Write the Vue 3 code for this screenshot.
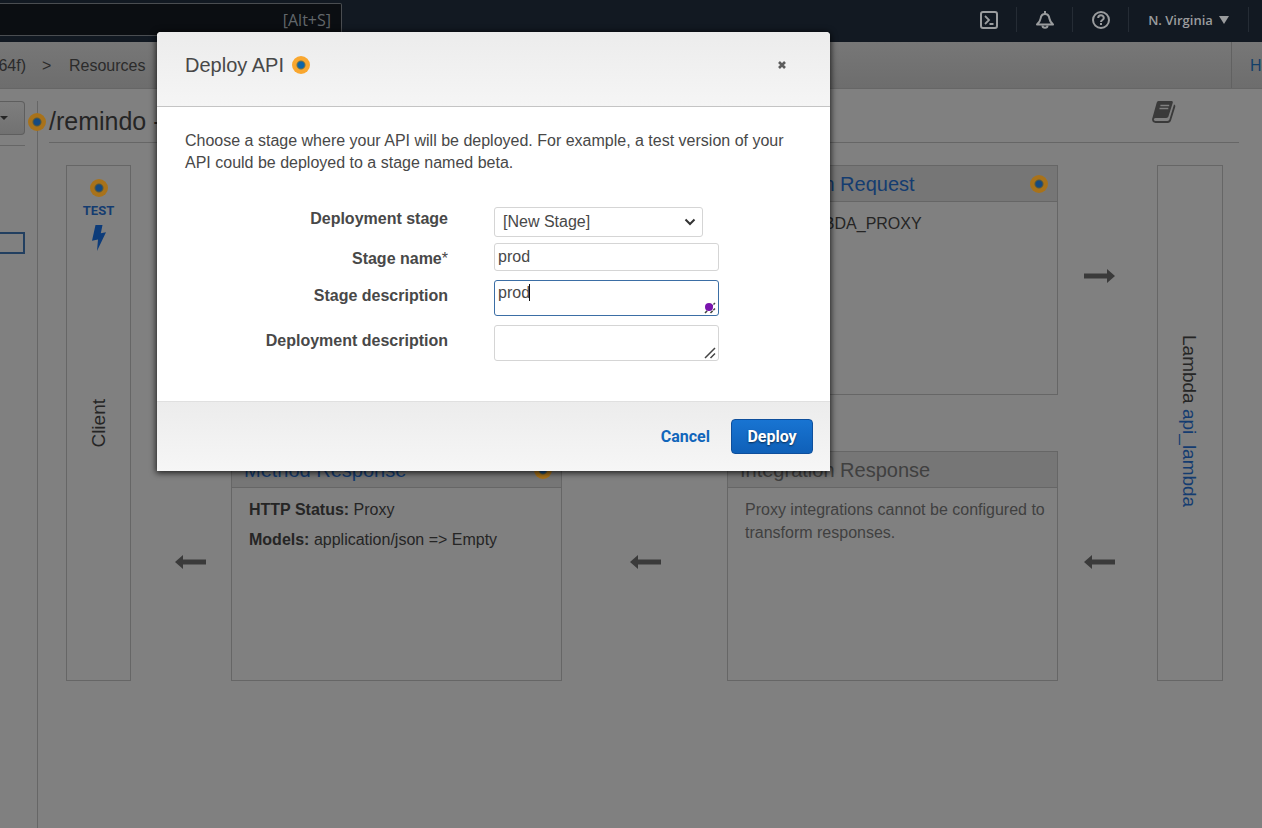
<script setup>
import { ref } from 'vue'

const stage = ref('new')
const stageName = ref('prod')
const stageDescription = ref('prod')
const deploymentDescription = ref('')
const flows = ['a-top', 'a-left', 'a-mid', 'a-right']
</script>

<template>
  <div class="page">
    <header class="nav">
      <input class="search" type="text" placeholder="[Alt+S]" aria-label="Search services" />
      <div class="nav-tools">
        <button class="tool" aria-label="CloudShell">
          <svg width="20" height="20" viewBox="0 0 20 20" fill="none" stroke="currentColor" stroke-width="2">
            <rect x="2" y="2" width="16" height="16" rx="2" />
            <path d="M6 6l4 4-4 4M10.500 14h4" stroke-width="1.800" />
          </svg>
        </button>
        <button class="tool" aria-label="Notifications">
          <svg width="20" height="20" viewBox="0 0 20 20" fill="none" stroke="currentColor" stroke-width="2" stroke-linejoin="round">
            <path d="M10 1v3M2 14.500C4.500 12 5.300 11 5.600 8.500 6 5.500 7.500 4 10 4s4 1.500 4.400 4.500c.3 2.500 1.100 3.500 3.600 6z" />
            <path d="M7.500 15.500c0 3 5 3 5 0" />
          </svg>
        </button>
        <button class="tool" aria-label="Support">
          <svg width="20" height="20" viewBox="0 0 20 20" fill="none" stroke="currentColor" stroke-width="2">
            <circle cx="10" cy="10" r="8" />
            <path d="M7.200 8c0-3.700 5.600-3.700 5.600 0 0 2-2.800 2-2.800 4M10 13v2" />
          </svg>
        </button>
        <button class="region">
          N. Virginia
          <svg width="10" height="8" viewBox="0 0 10 8"><path d="M0 0h10L5 8z" fill="currentColor" /></svg>
        </button>
      </div>
    </header>

    <nav class="crumbs" aria-label="Breadcrumb">
      <div class="trail"><span class="cut">64f)</span><span class="sep">&gt;</span><span>Resources</span></div>
      <a class="help" href="#">Help</a>
    </nav>

    <div class="columns">
      <aside class="side">
        <button class="actions" aria-label="Actions">
          <svg width="8" height="4" viewBox="0 0 8 4"><path d="M0 0h8L4 4z" fill="currentColor" /></svg>
        </button>
        <div class="rule"></div>
        <div class="selected"></div>
      </aside>

      <main class="main">
        <div class="title-row">
          <h1><span class="dot title-dot"></span>/remindo - GET</h1>
          <svg class="book" width="24" height="22" viewBox="0 0 24 22">
            <path d="M6.500 0h12.700c1.300 0 1.900.8 1.500 2l-4.200 13.300c-.4 1.200-1 1.700-2.300 1.700H3.500c-2.200 0-2.200 3 0 3h12c1 0 1.600-.5 1.900-1.400L22 3.500c1.100.4 1.600 1.200 1.200 2.400L19 19.500c-.5 1.600-1.600 2.500-3.200 2.500H3.500C.8 22-.6 19.500.4 17L4.600 2C5 .8 5.500 0 6.500 0z" fill="#3a3a3a" />
            <path d="M8.400 4.500h8.800M7.500 7.500h8.800" stroke="#808080" stroke-width="1.300" />
          </svg>
        </div>

        <div class="flow">
          <section class="end client">
            <a class="test" href="#">
              <span class="dot"></span>
              TEST
              <svg width="14" height="26" viewBox="0 0 14 26"><path d="M3.500 0h7L8.800 8.200l5.200-1L5 26l1-11.500-6 1.200z" fill="#0d3c7a" /></svg>
            </a>
            <span class="vertical up">Client</span>
          </section>

          <div v-for="f in flows" :key="f" class="arrow" :class="f">
            <svg width="32" height="14" viewBox="0 0 32 14"><path d="M0 7l8-7v4.500h23v5H8V14z" fill="currentColor" /></svg>
          </div>

          <section class="card request">
            <h2><a href="#">Integration Request</a><span class="dot"></span></h2>
            <p><b>Type:</b> LAMBDA_PROXY</p>
          </section>
          <section class="card method">
            <h2><a href="#">Method Response</a><span class="dot"></span></h2>
            <p><b>HTTP Status:</b> Proxy</p>
            <p><b>Models:</b> application/json =&gt; Empty</p>
          </section>
          <section class="card response">
            <h2>Integration Response</h2>
            <p>Proxy integrations cannot be configured to transform responses.</p>
          </section>

          <section class="end lambda">
            <span class="vertical">Lambda <a href="#">api_lambda</a></span>
          </section>
        </div>
      </main>
    </div>

    <form class="modal" role="dialog" aria-labelledby="dialog-title" @submit.prevent>
      <header class="modal-head">
        <h2 id="dialog-title">Deploy API</h2>
        <span class="dot bright"></span>
        <button type="button" class="close" aria-label="Close">
          <svg width="8" height="8" viewBox="0 0 8 8"><path d="M1 1l6 6M7 1L1 7" stroke="#5c5c5c" stroke-width="2.600" /></svg>
        </button>
      </header>
      <div class="modal-body">
        <p>Choose a stage where your API will be deployed. For example, a test version of your API could be deployed to a stage named beta.</p>
        <div class="fields">
          <label for="stage">Deployment stage</label>
          <div class="control pick">
            <select id="stage" v-model="stage"><option value="new">[New Stage]</option></select>
            <svg class="chevron" width="12" height="8" viewBox="0 0 12 8" fill="none"><path d="M1.500 1.500L6 6l4.500-4.500" stroke="#333" stroke-width="2" /></svg>
          </div>
          <label for="name">Stage name<span class="star">*</span></label>
          <div class="control"><input id="name" v-model="stageName" type="text" /></div>
          <label for="sdesc">Stage description</label>
          <div class="control">
            <textarea id="sdesc" v-model="stageDescription" class="active" rows="1" spellcheck="false"></textarea>
            <svg class="grip" width="12" height="12" viewBox="0 0 12 12"><path d="M1 11L11 1M6.500 11L11 6.500" stroke="#444" stroke-width="1.500" stroke-dasharray="3 1" /></svg>
            <span class="caret"></span><span class="marker"></span>
          </div>
          <label for="ddesc">Deployment description</label>
          <div class="control">
            <textarea id="ddesc" v-model="deploymentDescription" rows="1"></textarea>
            <svg class="grip" width="12" height="12" viewBox="0 0 12 12"><path d="M1 11L11 1M6.500 11L11 6.500" stroke="#444" stroke-width="1.500" /></svg>
          </div>
        </div>
      </div>
      <footer class="modal-foot">
        <button type="button" class="cancel">Cancel</button>
        <button type="submit" class="deploy">Deploy</button>
      </footer>
    </form>
  </div>
</template>

<style>
body { margin: 0; background: #808080; }
</style>

<style scoped>
* { box-sizing: border-box; }
.page {
  position: relative; min-height: 100vh; overflow: hidden; display: flex; flex-direction: column;
  background: #808080; color: #252525; font: 16px/22px "Liberation Sans", Arial, sans-serif;
}
button { padding: 0; border: 0; background: none; color: inherit; font: inherit; cursor: pointer; }
h1, h2, p { margin: 0; font-weight: normal; }
a { color: #143c70; text-decoration: none; }

.nav { display: flex; justify-content: space-between; height: 42px; background: #121922; color: #9a9c9e; }
.search {
  width: 342px; height: 33px; margin-top: 3px; padding: 0 10px; border: 1px solid #4a4d51; border-left: 0;
  border-radius: 0 2px 2px 0; background: #0b0e12; color: #777; text-align: right;
  font: 16px "Open Sans", sans-serif; outline: 0;
}
.search::placeholder { color: #62676b; opacity: 1; }
.nav-tools { display: flex; align-items: flex-start; padding: 7px 13px 0 0; }
.tool, .region { display: flex; align-items: center; justify-content: center; height: 25px; border-right: 1px solid #252c35; }
.tool { width: 56px; }
.region { width: 120px; gap: 6px; font: 600 13px/22px "Open Sans", sans-serif; }

.crumbs {
  display: flex; justify-content: space-between; height: 47px; overflow: hidden; line-height: 48px;
  border-bottom: 1px solid #666; background: linear-gradient(#777, #6d6d6d); color: #2b2b2b;
}
.trail { display: flex; gap: 16px; }
.cut { width: 26px; display: flex; justify-content: flex-end; }
.sep { width: 11px; }
.help { width: 31px; padding-left: 18px; border-left: 1px solid #616161; color: #123f69; overflow: hidden; }

.columns { flex: 1; display: flex; }
.side { width: 38px; margin-top: 12px; border-right: 1px solid #666; }
.actions {
  display: flex; align-items: center; justify-content: flex-start; width: 25px; height: 34px;
  border: 1px solid #5e5e5e; border-left: 0; border-radius: 0 4px 4px 0; background: linear-gradient(#7e7e7e, #717171);
}
.rule { width: 25px; height: 1px; margin-top: 10px; background: #666; }
.selected { width: 25px; height: 22px; margin-top: 86px; border: 2px solid #223f60; border-left: 0; }
.main { flex: 1; min-width: 0; }
.title-row { display: flex; justify-content: space-between; height: 54px; margin: 0 23px 0 11px; padding-top: 12px; border-bottom: 1px solid #666; }
.title-row h1 { position: relative; font-size: 25px; line-height: 40px; }
.book { margin-right: 63px; }
.dot {
  flex: none; display: block; width: 18px; height: 18px; border-radius: 50%;
  background: radial-gradient(circle, #164a80 0 3px, #5a5a3c 4px, #a8721a 5px);
}
.dot.bright { background: radial-gradient(circle, #0d65a8 0 3px, #7a7545 4px, #f9a72f 5px); }
.title-dot { position: absolute; left: -21px; top: 12px; }

.flow {
  display: grid; grid-template-columns: 65px 100px minmax(0, 1fr) 165px minmax(0, 1fr) 99px 66px;
  grid-template-rows: 230px 230px; row-gap: 56px; margin: 22px 39px 0 28px;
}
.end { grid-row: 1 / 3; position: relative; display: flex; align-items: center; justify-content: center; border: 1px solid #666; }
.client { grid-column: 1; }
.lambda { grid-column: 7; }
.vertical { writing-mode: vertical-rl; font-size: 19px; line-height: 22px; }
.up { transform: rotate(180deg); }
.lambda .vertical { padding: 0 2px 4px 0; }
.test {
  position: absolute; top: 13px; left: 0; right: 0; display: flex; flex-direction: column; align-items: center; gap: 7px;
  font: bold 13px/14px Roboto, sans-serif;
}
.arrow { display: flex; align-items: center; justify-content: center; padding-bottom: 9px; color: #3a3a3a; }
.a-top { grid-area: 1 / 6; padding-right: 18px; }
.a-top svg { transform: scaleX(-1); }
.a-left { grid-area: 2 / 2; padding-left: 20px; }
.a-mid { grid-area: 2 / 4; padding-left: 2px; }
.a-right { grid-area: 2 / 6; padding-right: 16px; }
.card { border: 1px solid #666; }
.card h2 {
  display: flex; align-items: center; justify-content: space-between; height: 36px; padding: 0 9px 0 12px;
  border-bottom: 1px solid #666; background: #767676; font-size: 20px;
}
.card p { padding: 0 8px 0 17px; line-height: 23px; }
.card h2 + p { margin-top: 10px; }
.card p + p { margin-top: 7px; }
.request { grid-area: 1 / 5; }
.method { grid-area: 2 / 3; }
.response { grid-area: 2 / 5; color: #404040; }

.modal {
  position: absolute; top: 32px; left: 157px; width: 673px; border-radius: 4px 4px 0 0; background: #fff; color: #484848;
  box-shadow: 0 1px 6px 1px rgba(0, 0, 0, .75);
}
.modal-head {
  display: flex; align-items: center; gap: 8px; height: 75px; padding: 0 44px 8px 28px; border-bottom: 1px solid #c4c4c4;
  border-radius: 4px 4px 0 0; background: linear-gradient(#ececec, #f5f5f5);
}
.modal-head h2 { font-size: 20px; }
.close { margin-left: auto; display: flex; }
.modal-body { padding: 23px 28px 31px; }
.modal-body p { margin-bottom: 33px; }
.fields { display: grid; grid-template-columns: 263px 225px; column-gap: 46px; }
.fields label { padding-top: 1px; font-weight: bold; text-align: right; }
.star { font-weight: normal; }
.control { position: relative; margin-bottom: 9px; }
.fields label:nth-of-type(n + 2) { padding-top: 5px; }
.control:last-child { margin-bottom: 9px; }
.pick { width: 209px; margin-bottom: 6px; }
select, input[type="text"]:not(.search), textarea {
  display: block; width: 100%; margin: 0; border: 1px solid #d5d5d5; border-radius: 3px; background: #fff; color: #484848;
  font: 16px/22px "Liberation Sans", Arial, sans-serif; outline: 0;
}
select { height: 30px; padding: 0 8px; appearance: none; }
.chevron { position: absolute; right: 7px; top: 11px; }
input[type="text"]:not(.search) { height: 28px; padding: 0 3px; }
textarea { height: 36px; padding: 1px 3px; overflow: hidden; resize: none; }
textarea.active { border-color: #3b6ea5; }
.grip { position: absolute; right: 3px; bottom: 2px; pointer-events: none; }
.caret { position: absolute; left: 35px; top: 4px; width: 1px; height: 17px; background: #111; }
.marker { position: absolute; right: 6px; bottom: 5px; width: 8px; height: 8px; border-radius: 50%; background: #7a14ae; }
.modal-foot {
  display: flex; align-items: center; justify-content: flex-end; gap: 21px; height: 70px; padding-right: 17px;
  border-top: 1px solid #e0e0e0; background: linear-gradient(#ececec, #f6f6f6); font: bold 16px Roboto, sans-serif;
}
.cancel { color: #1166bb; }
.deploy {
  width: 82px; height: 35px; border: 1px solid #0e4f9c; border-radius: 4px; background: linear-gradient(#1874d2, #0f60b8);
  color: #fff; text-shadow: 0 1px 2px rgba(0, 0, 0, .6);
}
</style>
